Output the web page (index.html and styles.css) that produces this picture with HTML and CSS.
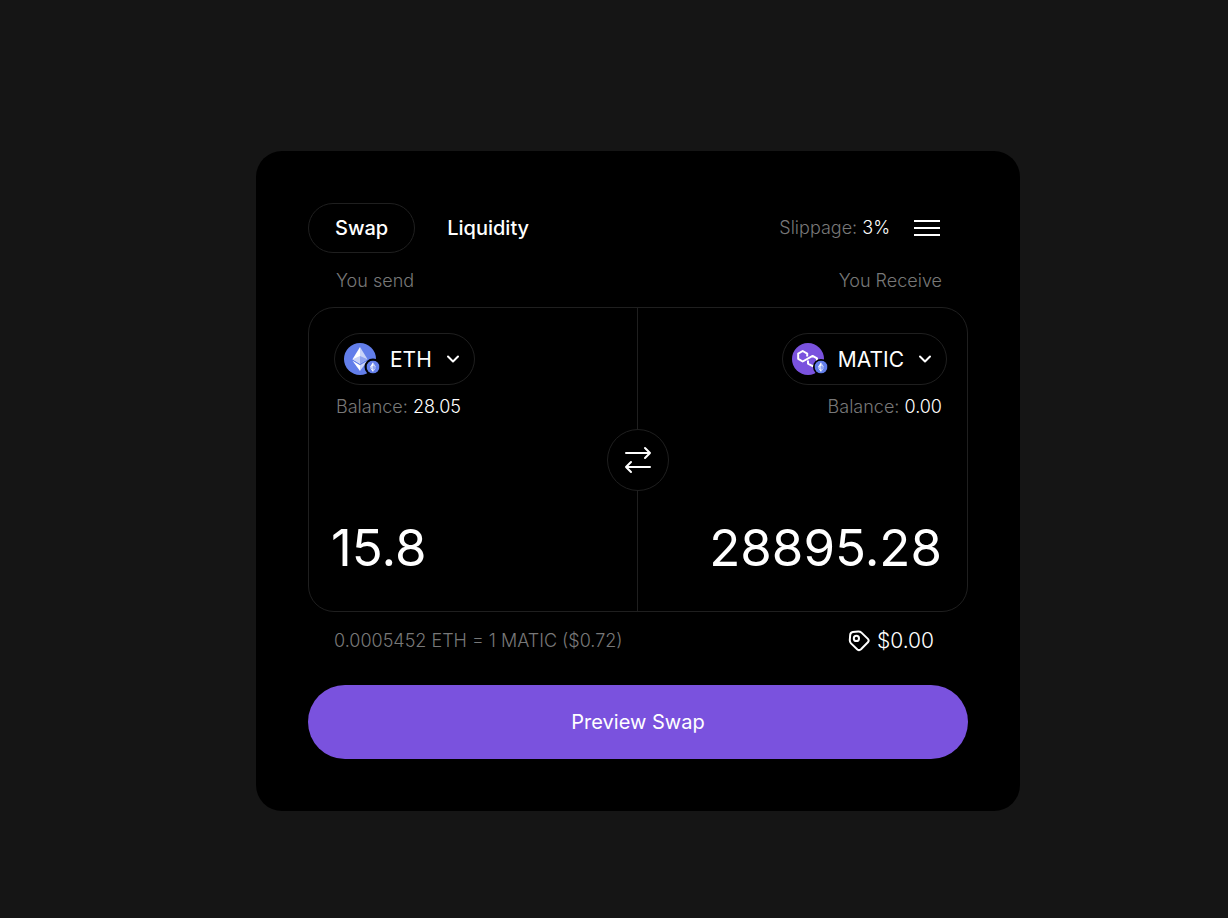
FILE: index.html
```html
<!DOCTYPE html>
<html lang="en">
<head>
  <meta charset="UTF-8">
  <meta name="viewport" content="width=device-width, initial-scale=1.0">
  <title>Swap</title>
  <link rel="stylesheet" href="styles.css">
</head>
<body>
  <!-- Shared icon shapes -->
  <svg class="sprite" aria-hidden="true">
    <symbol id="eth" viewBox="0 0 32 32">
      <circle cx="16" cy="16" r="16" fill="#627eea"/>
      <path d="M16 4 L8.5 16.3 L16 20.7 Z" fill="#fff"/>
      <path d="M16 4 L23.5 16.3 L16 20.7 Z" fill="#c9d3f8"/>
      <path d="M16 12.9 L8.5 16.3 L16 20.7 Z" fill="#c9d3f8"/>
      <path d="M16 12.9 L23.5 16.3 L16 20.7 Z" fill="#8fa3f0"/>
      <path d="M8.5 17.8 L16 22.2 V28 Z" fill="#fff"/>
      <path d="M23.5 17.8 L16 22.2 V28 Z" fill="#c9d3f8"/>
    </symbol>
    <symbol id="chevron" viewBox="0 0 14 14">
      <path d="M2 4.5 L7 9.5 L12 4.5" fill="none" stroke="#fff" stroke-width="2" stroke-linecap="round" stroke-linejoin="round"/>
    </symbol>
  </svg>

  <main class="card">
    <!-- Tabs and settings -->
    <header class="toolbar">
      <nav class="tabs">
        <button type="button" class="tab active">Swap</button>
        <button type="button" class="tab">Liquidity</button>
      </nav>
      <div class="settings">
        <span class="muted">Slippage: <span class="value">3%</span></span>
        <button type="button" class="menu" aria-label="Menu">
          <svg width="26" height="16" viewBox="0 0 26 16"><path d="M0 1H26M0 8H26M0 15H26" stroke="#fff" stroke-width="2"/></svg>
        </button>
      </div>
    </header>

    <div class="captions muted">
      <label for="send">You send</label>
      <label for="receive">You Receive</label>
    </div>

    <section class="panel">
      <div class="side send">
        <label class="token">
          <svg class="coin" viewBox="0 0 36 32" aria-hidden="true">
            <use href="#eth" width="32" height="32"/>
            <circle cx="29" cy="24" r="8.5" fill="#000"/>
            <use href="#eth" x="22.5" y="17.5" width="13" height="13"/>
          </svg>
          <select class="token-name" aria-label="Token to send">
            <option selected>ETH</option>
            <option>MATIC</option>
          </select>
          <svg class="chevron" aria-hidden="true"><use href="#chevron"/></svg>
        </label>
        <p class="balance muted">Balance: <span class="value">28.05</span></p>
        <input class="amount" id="send" type="text" inputmode="decimal" value="15.8">
      </div>

      <div class="side receive">
        <label class="token">
          <svg class="coin" viewBox="0 0 36 32" aria-hidden="true">
            <circle cx="16" cy="16" r="16" fill="#7a52de"/>
            <path d="M15.2 13.6 V10.6 L10.7 8 L6.2 10.6 V15.8 L10.7 18.5 L20.6 12.9 L25 15.4 V20.6 L20.6 23.2 L16 20.6 V17.6" fill="none" stroke="#fff" stroke-width="2" stroke-linejoin="round"/>
            <circle cx="29" cy="24" r="8" fill="#000"/>
            <use href="#eth" x="22.5" y="17.5" width="13" height="13"/>
          </svg>
          <select class="token-name" aria-label="Token to receive">
            <option>ETH</option>
            <option selected>MATIC</option>
          </select>
          <svg class="chevron" aria-hidden="true"><use href="#chevron"/></svg>
        </label>
        <p class="balance muted">Balance: <span class="value">0.00</span></p>
        <input class="amount" id="receive" type="text" inputmode="decimal" value="28895.28">
      </div>

      <button type="button" class="flip" aria-label="Switch tokens">
        <svg width="28" height="28" viewBox="0 0 28 28" fill="none" stroke="#fff" stroke-width="2" stroke-linecap="round" stroke-linejoin="round">
          <path d="M2 7H26M21 2L26 7L21 12"/>
          <path d="M26 21H2M7 16L2 21L7 26"/>
        </svg>
      </button>
    </section>

    <div class="summary">
      <span class="muted">0.0005452 ETH = 1 MATIC ($0.72)</span>
      <span class="fee">
        <svg width="22" height="22" viewBox="0 0 22 22" fill="none" stroke="#fff" stroke-width="2" stroke-linejoin="round" aria-hidden="true">
          <path d="M1.8 10 L2.2 4.9 Q2.4 2.4 4.8 2 L10.2 1.4 Q12 1.3 13.2 2.4 L19.9 8.9 Q21.4 10.6 19.9 12.3 L13 19.3 Q11.2 20.9 9.4 19.5 L3 13.4 Q1.7 12 1.8 10 Z"/>
          <circle cx="8.4" cy="8.4" r="2.6"/>
        </svg>
        $0.00
      </span>
    </div>

    <button type="button" class="preview">Preview Swap</button>
  </main>
</body>
</html>
```

FILE: styles.css
```css
* {
  box-sizing: border-box;
}

body {
  margin: 0;
  min-height: 100vh;
  padding: 44px 0 0 48px;
  display: flex;
  justify-content: center;
  align-items: center;
  background: #151515;
  color: #fff;
  font-family: Inter, sans-serif;
  font-weight: 300;
}

button,
input,
select {
  margin: 0;
  padding: 0;
  border: none;
  background: none;
  color: inherit;
  font: inherit;
}

button,
select {
  cursor: pointer;
}

.sprite {
  position: absolute;
  width: 0;
  height: 0;
}

.card {
  width: 100%;
  max-width: 764px;
  padding: 52px;
  background: #000;
  border-radius: 26px;
}

.muted {
  color: #787878;
  font-size: 18px;
  line-height: 24px;
}

.value {
  color: #fff;
}

.toolbar,
.settings,
.captions,
.summary {
  display: flex;
  justify-content: space-between;
  align-items: center;
}

.tabs {
  display: flex;
  gap: 5px;
}

.tab {
  padding: 0 26px;
  border: 1px solid transparent;
  border-radius: 25px;
  font-size: 20px;
  line-height: 48px;
  font-weight: 500;
}

.tab.active {
  border-color: #1f1f1f;
}

.settings {
  gap: 24px;
  padding-right: 28px;
}

.menu,
.menu svg {
  display: block;
}

.captions {
  padding: 16px 26px 14px 28px;
}

.panel {
  position: relative;
  display: grid;
  grid-template-columns: 1fr 1fr;
  border: 1px solid #1f1f1f;
  border-radius: 26px;
}

.side {
  display: flex;
  flex-direction: column;
  align-items: flex-start;
  min-width: 0;
  padding: 25px 20px 32px;
}

.send {
  border-right: 1px solid #1f1f1f;
}

.send .token {
  margin-left: 5px;
}

.receive {
  align-items: flex-end;
}

.token {
  display: flex;
  align-items: center;
  height: 52px;
  padding: 0 14px 0 9px;
  border: 1px solid #1f1f1f;
  border-radius: 26px;
}

.coin {
  width: 36px;
  height: 32px;
}

.token-name {
  appearance: none;
  field-sizing: content;
  margin: 0 14px 0 10px;
  font-size: 21px;
  font-weight: 400;
}

.chevron {
  width: 14px;
  height: 14px;
  pointer-events: none;
}

.balance {
  margin: 10px 5px 0 7px;
}

.amount {
  width: 100%;
  height: 64px;
  margin-top: 96px;
  padding: 0 5px 0 2px;
  font-size: 51px;
  font-weight: 400;
}

.receive .amount {
  text-align: right;
}

.flip {
  position: absolute;
  top: 50%;
  left: 50%;
  display: grid;
  place-items: center;
  width: 62px;
  height: 62px;
  border: 1px solid #1f1f1f;
  border-radius: 50%;
  background: #000;
  transform: translate(-50%, -50%);
}

.summary {
  padding: 15px 34px 30px 26px;
}

.fee {
  display: flex;
  align-items: center;
  gap: 7px;
  font-size: 21px;
  line-height: 28px;
}

.preview {
  width: 100%;
  border-radius: 37px;
  background: #7a52de;
  font-size: 20px;
  font-weight: 400;
  line-height: 74px;
}
```
